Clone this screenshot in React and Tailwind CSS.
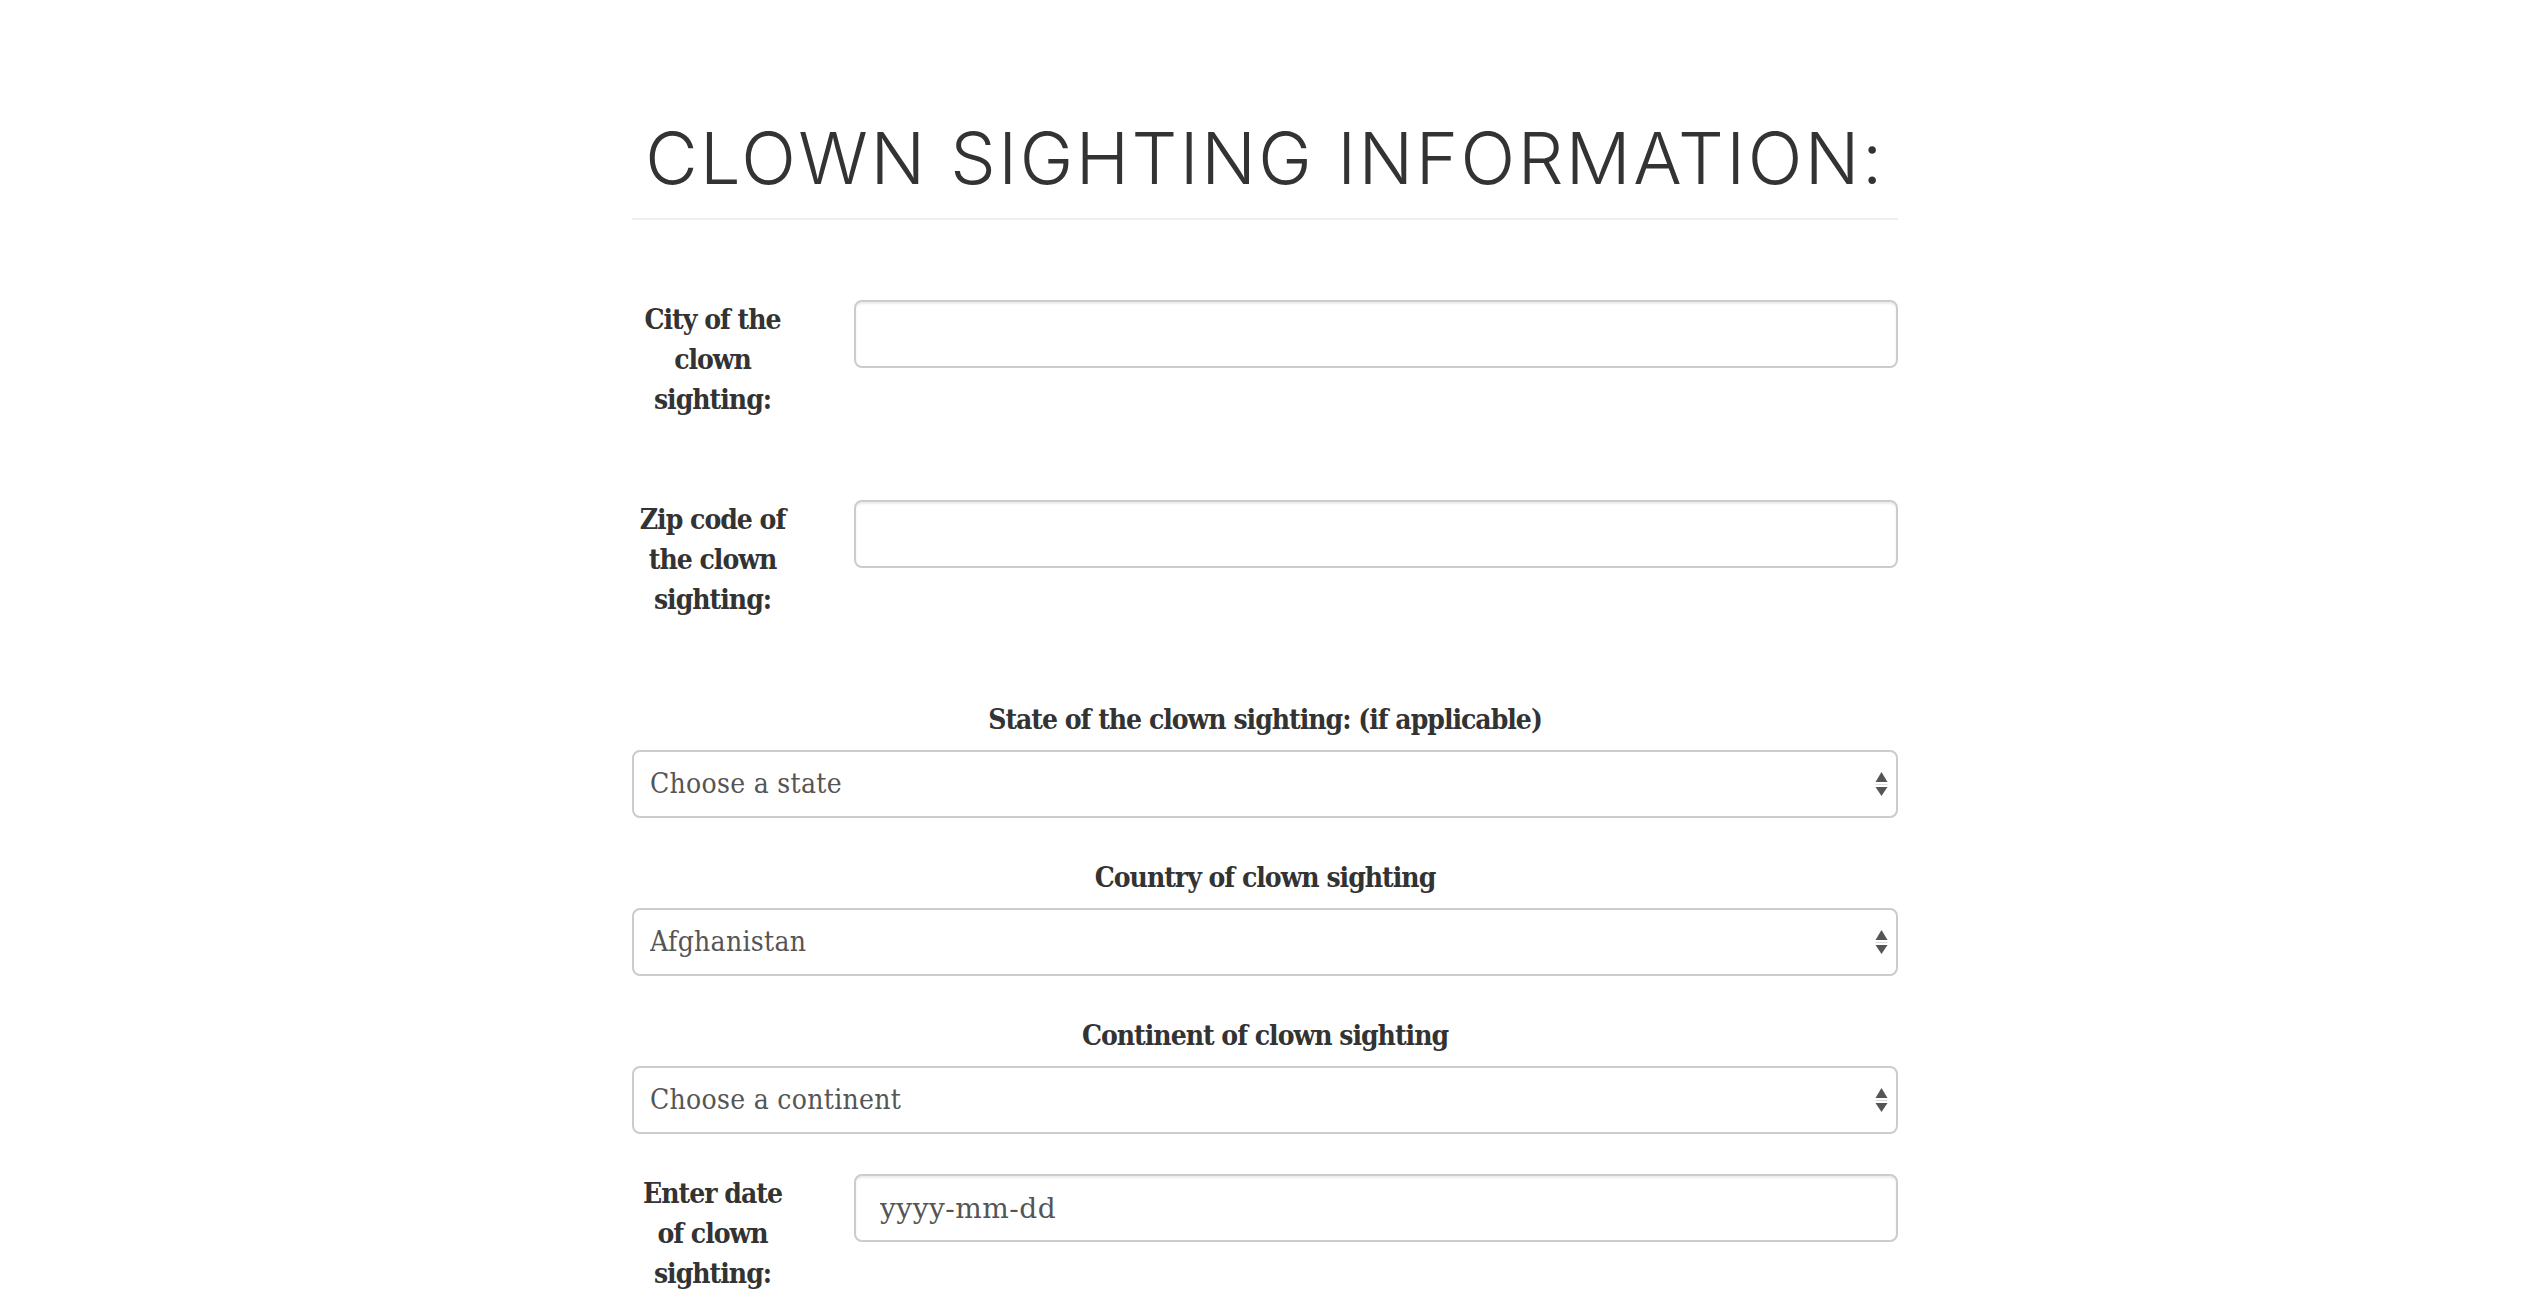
import { useState } from "react";

const labelFont = { fontFamily: '"DejaVu Serif", "Liberation Serif", serif' };

const SelectArrows = () => (
  <svg
    width="13"
    height="26"
    viewBox="0 0 13 26"
    className="pointer-events-none absolute right-[10px] top-[21px]"
  >
    <polygon points="6.5,1 12.5,11 0.5,11" fill="#555" />
    <line x1="0.5" y1="13.5" x2="12.5" y2="13.5" stroke="#ddd" strokeWidth="1" />
    <polygon points="0.5,16 12.5,16 6.5,25" fill="#555" />
  </svg>
);

const FieldLabel = ({ children }) => (
  <label className="w-[161px] shrink-0 whitespace-nowrap text-center text-[28px] leading-[40px] font-bold font-stretch-condensed tracking-[-1px] text-[#333]">
    {children}
  </label>
);

const TextInput = ({ placeholder, value, onChange }) => (
  <input
    type="text"
    value={value}
    onChange={onChange}
    placeholder={placeholder}
    className="ml-[61px] h-[68px] flex-1 rounded-[8px] border-2 border-[#ccc] bg-white pl-[24px] text-[28px] tracking-[0.5px] text-[#555] shadow-[inset_0_2px_2px_rgba(0,0,0,0.075)] outline-none placeholder:text-[#555]"
  />
);

const SelectField = ({ label, value, options, onChange, className }) => (
  <div className={className}>
    <div className="mb-[10px] text-center text-[28px] leading-[40px] font-bold font-stretch-condensed tracking-[-1px] text-[#333]">
      {label}
    </div>
    <div className="relative">
      <select
        value={value}
        onChange={onChange}
        className="h-[68px] w-full appearance-none rounded-[8px] border-2 border-[#ccc] bg-white pl-[16px] text-[28px] tracking-[0.3px] text-[#555] outline-none font-stretch-condensed"
        style={labelFont}
      >
        {options.map((o) => (
          <option key={o}>{o}</option>
        ))}
      </select>
      <SelectArrows />
    </div>
  </div>
);

const states = ["Choose a state", "Alabama", "Alaska", "Arizona", "Arkansas", "California"];
const countries = ["Afghanistan", "Albania", "Algeria", "Andorra", "Angola"];
const continents = ["Choose a continent", "Africa", "Antarctica", "Asia", "Europe", "North America", "Oceania", "South America"];

export default function App() {
  const [city, setCity] = useState("");
  const [zip, setZip] = useState("");
  const [state, setState] = useState(states[0]);
  const [country, setCountry] = useState(countries[0]);
  const [continent, setContinent] = useState(continents[0]);
  const [date, setDate] = useState("");

  return (
    <div className="min-h-screen bg-white">
      <div className="ml-[632px] w-[1266px] pt-[122px] pb-[40px]" style={labelFont}>
        <h1
          className="text-center text-[72px] leading-[72px] font-light tracking-[2.5px] text-[#333]"
          style={{ fontFamily: 'Inter, "Open Sans", sans-serif' }}
        >
          CLOWN SIGHTING INFORMATION:
        </h1>
        <hr className="mt-[24px] border-t-2 border-[#eee]" />

        {/* City */}
        <div className="mt-[80px] flex items-start">
          <FieldLabel>
            City of the
            <br />
            clown
            <br />
            sighting:
          </FieldLabel>
          <TextInput value={city} onChange={(e) => setCity(e.target.value)} />
        </div>

        {/* Zip */}
        <div className="mt-[80px] flex items-start">
          <FieldLabel>
            Zip code of
            <br />
            the clown
            <br />
            sighting:
          </FieldLabel>
          <TextInput value={zip} onChange={(e) => setZip(e.target.value)} />
        </div>

        <SelectField
          className="mt-[80px]"
          label="State of the clown sighting: (if applicable)"
          value={state}
          options={states}
          onChange={(e) => setState(e.target.value)}
        />
        <SelectField
          className="mt-[40px]"
          label="Country of clown sighting"
          value={country}
          options={countries}
          onChange={(e) => setCountry(e.target.value)}
        />
        <SelectField
          className="mt-[40px]"
          label="Continent of clown sighting"
          value={continent}
          options={continents}
          onChange={(e) => setContinent(e.target.value)}
        />

        {/* Date */}
        <div className="mt-[40px] flex items-start">
          <FieldLabel>
            Enter date
            <br />
            of clown
            <br />
            sighting:
          </FieldLabel>
          <TextInput
            placeholder="yyyy-mm-dd"
            value={date}
            onChange={(e) => setDate(e.target.value)}
          />
        </div>
      </div>
    </div>
  );
}
